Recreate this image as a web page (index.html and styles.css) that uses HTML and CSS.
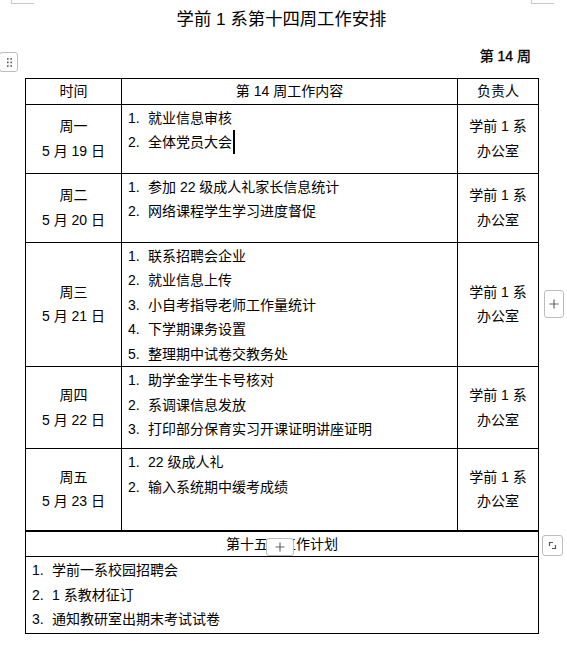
FILE: index.html
```html
<!DOCTYPE html>
<html lang="zh-CN">
<head>
<meta charset="utf-8">
<title>学前 1 系第十四周工作安排</title>
<link rel="stylesheet" href="styles.css">
</head>
<body>
<div class="page">
  <span class="crop crop-tl"></span>
  <span class="crop crop-tr"></span>
  <span class="handle"><svg width="19" height="21" viewBox="0 0 19 21"><g fill="#555"><rect x="7" y="6" width="1.6" height="1.6"/><rect x="10.4" y="6" width="1.6" height="1.6"/><rect x="7" y="9.6" width="1.6" height="1.6"/><rect x="10.4" y="9.6" width="1.6" height="1.6"/><rect x="7" y="13.2" width="1.6" height="1.6"/><rect x="10.4" y="13.2" width="1.6" height="1.6"/></g></svg></span>

  <h1 class="title">学前 1 系第十四周工作安排</h1>
  <div class="week">第 14 周</div>

  <table class="sched">
    <colgroup><col class="c1"><col class="c2"><col class="c3"></colgroup>
    <thead>
      <tr class="r-head"><th>时间</th><th>第 14 周工作内容</th><th>负责人</th></tr>
    </thead>
    <tbody>
      <tr class="r-short">
        <td class="day">周一<br>5 月 19 日</td>
        <td class="items">
          <div class="item"><span class="num">1.</span><span>就业信息审核</span></div>
          <div class="item"><span class="num">2.</span><span>全体党员大会</span><span class="caret"></span></div>
        </td>
        <td class="owner">学前 1 系<br>办公室</td>
      </tr>
      <tr class="r-short">
        <td class="day">周二<br>5 月 20 日</td>
        <td class="items">
          <div class="item"><span class="num">1.</span><span>参加 22 级成人礼家长信息统计</span></div>
          <div class="item"><span class="num">2.</span><span>网络课程学生学习进度督促</span></div>
        </td>
        <td class="owner">学前 1 系<br>办公室</td>
      </tr>
      <tr class="r-long">
        <td class="day">周三<br>5 月 21 日</td>
        <td class="items">
          <div class="item"><span class="num">1.</span><span>联系招聘会企业</span></div>
          <div class="item"><span class="num">2.</span><span>就业信息上传</span></div>
          <div class="item"><span class="num">3.</span><span>小自考指导老师工作量统计</span></div>
          <div class="item"><span class="num">4.</span><span>下学期课务设置</span></div>
          <div class="item"><span class="num">5.</span><span>整理期中试卷交教务处</span></div>
        </td>
        <td class="owner">学前 1 系<br>办公室</td>
      </tr>
      <tr class="r-mid">
        <td class="day">周四<br>5 月 22 日</td>
        <td class="items">
          <div class="item"><span class="num">1.</span><span>助学金学生卡号核对</span></div>
          <div class="item"><span class="num">2.</span><span>系调课信息发放</span></div>
          <div class="item"><span class="num">3.</span><span>打印部分保育实习开课证明讲座证明</span></div>
        </td>
        <td class="owner">学前 1 系<br>办公室</td>
      </tr>
      <tr class="r-mid r-last">
        <td class="day">周五<br>5 月 23 日</td>
        <td class="items">
          <div class="item"><span class="num">1.</span><span>22 级成人礼</span></div>
          <div class="item"><span class="num">2.</span><span>输入系统期中缓考成绩</span></div>
        </td>
        <td class="owner">学前 1 系<br>办公室</td>
      </tr>
      <tr class="r-plan-head">
        <td colspan="3" class="plan-head">第十五周工作计划</td>
      </tr>
      <tr class="r-plan">
        <td colspan="3" class="plan">
          <div class="item"><span class="num">1.</span><span>学前一系校园招聘会</span></div>
          <div class="item"><span class="num">2.</span><span>1 系教材征订</span></div>
          <div class="item"><span class="num">3.</span><span>通知教研室出期末考试试卷</span></div>
        </td>
      </tr>
    </tbody>
  </table>

  <span class="tool tool-add-row"><svg width="20" height="28" viewBox="0 0 20 28"><path d="M10 9.5V18.5M5.5 14H14.5" stroke="#666" stroke-width="1.2" fill="none"/></svg></span>
  <span class="tool tool-add-mid"><svg width="28" height="18" viewBox="0 0 28 18"><path d="M14 4.5V13.5M9.5 9H18.5" stroke="#666" stroke-width="1.2" fill="none"/></svg></span>
  <span class="tool tool-resize"><svg width="21" height="21" viewBox="0 0 21 21"><path d="M7.5 11V7.5H11M10 13.5H13.5V10" stroke="#555" stroke-width="1.2" fill="none"/></svg></span>
</div>
</body>
</html>
```

FILE: styles.css
```css
html, body {
  margin: 0;
  padding: 0;
  background: #fff;
}

.page {
  position: relative;
  width: 567px;
  height: 647px;
  overflow: hidden;
  font-family: "Liberation Sans", "Noto Sans CJK SC", sans-serif;
  color: #000;
}

.crop {
  position: absolute;
  top: 0;
  width: 22px;
  height: 3px;
  border-left: 1px solid #c8c8c8;
  border-bottom: 1px solid #c8c8c8;
}
.crop-tl { left: 11px; }
.crop-tr { left: 531px; }

.handle {
  position: absolute;
  left: -1px;
  top: 52px;
  width: 19px;
  height: 20px;
  border: 1px solid #bdbdbd;
  border-radius: 3px;
  background: #fff;
  box-sizing: border-box;
}
.handle svg { display: block; margin: -1px 0 0 0; }

.title {
  margin: 7px 0 0 25px;
  width: 513px;
  text-align: center;
  font-size: 17.33px;
  font-weight: normal;
  line-height: 24px;
}

.week {
  margin: 13px 0 0 25px;
  width: 506px;
  text-align: right;
  font-size: 14px;
  font-weight: normal;
  -webkit-text-stroke: 0.35px #000;
  line-height: 24px;
}

.sched {
  margin: 10px 0 0 25px;
  width: 513px;
  border-collapse: collapse;
  table-layout: fixed;
  font-size: 14px;
  line-height: 24.5px;
}
.c1 { width: 96px; }
.c2 { width: 336px; }
.c3 { width: 81px; }

.sched th,
.sched td {
  border: 1px solid #000;
  padding: 0;
  font-weight: normal;
}

.r-head { height: 25px; }
.r-head th { text-align: center; vertical-align: middle; }

.r-short { height: 69px; }
.r-long { height: 124px; }
.r-mid { height: 82px; }
.r-last td { border-bottom: 2px solid #000; }

.day,
.owner {
  text-align: center;
  vertical-align: middle;
}

.items {
  vertical-align: top;
  padding: 1px 6px 0 6px !important;
}

.item {
  display: flex;
  align-items: center;
  white-space: nowrap;
}
.num {
  width: 20px;
  flex: none;
}

.caret {
  display: inline-block;
  width: 2px;
  height: 24px;
  background: #000;
  margin-left: 1px;
}

.r-plan-head { height: 25px; }
.plan-head {
  text-align: center;
  vertical-align: middle;
}

.r-plan { height: 77px; }
.plan {
  vertical-align: top;
  padding: 1px 6px 0 6px !important;
}

.tool {
  position: absolute;
  box-sizing: border-box;
  border: 1px solid #bdbdbd;
  border-radius: 3px;
  background: #fff;
}
.tool svg { display: block; margin: -1px; }
.tool-add-row { left: 544px; top: 290px; width: 20px; height: 28px; }
.tool-add-mid { left: 266px; top: 538px; width: 28px; height: 18px; }
.tool-resize { left: 542px; top: 535px; width: 21px; height: 21px; }
```
